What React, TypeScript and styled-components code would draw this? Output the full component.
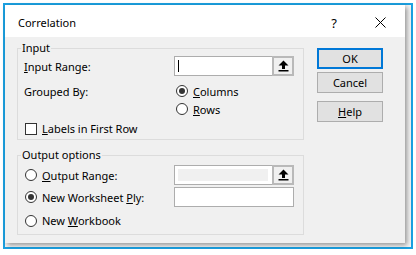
import React from 'react';
import styled, { createGlobalStyle } from 'styled-components';

const GlobalStyle = createGlobalStyle`
  body {
    margin: 0;
    background: #ffffff;
    font-family: "Noto Sans", "Open Sans", sans-serif;
    font-size: 11px;
    color: #000;
  }
`;

const Frame = styled.div`
  margin: 3px 0 0 3px;
  width: 410px;
  height: 246px;
  box-sizing: border-box;
  border: 2px solid #1ba1e2;
  background: #f4f4f4;
`;

const Dialog = styled.div`
  width: 400px;
  height: 238px;
  display: flex;
  flex-direction: column;
  background: #f0f0f0;
  box-shadow: 2px 2px 5px rgba(0, 0, 0, 0.4);
`;

const TitleBar = styled.div`
  flex: none;
  height: 32px;
  box-sizing: border-box;
  padding: 3px 2px 0 13px;
  display: flex;
  align-items: center;
  background: #fff;
`;

const Title = styled.div`
  flex: 1;
`;

const CaptionButton = styled.div`
  width: 46px;
  height: 100%;
  display: flex;
  align-items: center;
  justify-content: center;
  font-size: 13px;
`;

const Body = styled.div`
  flex: 1;
  display: flex;
  padding-left: 12px;
`;

const LeftColumn = styled.div`
  width: 287px;
  padding-top: 3px;
  display: flex;
  flex-direction: column;
  gap: 7px;
`;

const RightColumn = styled.div`
  margin-left: 13px;
  width: 66px;
  padding-top: 11px;
  display: flex;
  flex-direction: column;
`;

const Group = styled.fieldset<{ $pb: number }>`
  margin: 0;
  padding: 0 8px ${(p) => p.$pb}px 6px;
  border: 1px solid #dcdcdc;
  min-width: 0;
`;

const Legend = styled.legend`
  margin-left: -3px;
  padding: 0 1px;
  line-height: 16px;
`;

const Row = styled.div<{ $h: number; $mt?: number }>`
  display: grid;
  grid-template-columns: 151px 120px;
  align-items: center;
  height: ${(p) => p.$h}px;
  margin-top: ${(p) => p.$mt ?? 0}px;
`;

const GroupedRow = styled.div`
  display: grid;
  grid-template-columns: 151px 120px;
  grid-template-rows: 18px 18px;
  align-items: center;
  margin-top: 6px;
  margin-bottom: 1px;
`;

const Label = styled.span``;

const Choice = styled.label`
  display: flex;
  align-items: center;
  gap: 5px;
  margin-left: 1px;
`;

const RadioCircle = styled.span<{ $on?: boolean }>`
  width: 12px;
  height: 12px;
  box-sizing: border-box;
  border: 1px solid #333;
  border-radius: 50%;
  background: #fff;
  display: flex;
  align-items: center;
  justify-content: center;
  &::after {
    content: '';
    width: 6px;
    height: 6px;
    border-radius: 50%;
    background: ${(p) => (p.$on ? '#333' : 'transparent')};
  }
`;

const CheckBox = styled.span`
  width: 12px;
  height: 12px;
  box-sizing: border-box;
  border: 1px solid #333;
  background: #fff;
`;

const Field = styled.div`
  width: 120px;
  height: 20px;
  box-sizing: border-box;
  border: 1px solid #adadad;
  background: #fff;
  display: flex;
  align-items: stretch;
  margin-left: -1px;
`;

const FieldText = styled.div<{ $disabled?: boolean }>`
  flex: 1;
  margin: 3px;
  margin-right: 4px;
  background: ${(p) => (p.$disabled ? '#f0f0f0' : '#fff')};
  display: flex;
  align-items: center;
`;

const Caret = styled.span`
  width: 1px;
  height: 12px;
  background: #000;
`;

const RefButton = styled.div`
  width: 22px;
  margin: -1px -1px -1px 0;
  box-sizing: border-box;
  border: 2px solid #b9b9b9;
  background: #f0f0f0;
  display: flex;
  align-items: center;
  justify-content: center;
`;

const Button = styled.div<{ $default?: boolean; $mt?: number }>`
  height: 21px;
  box-sizing: border-box;
  margin-top: ${(p) => p.$mt ?? 0}px;
  border: ${(p) => (p.$default ? '2px solid #0078d7' : '1px solid #adadad')};
  background: #e1e1e1;
  display: flex;
  align-items: center;
  justify-content: center;
`;

const UpArrow = () => (
  <svg width="11" height="12" viewBox="0 0 11 12">
    <path d="M5.5 0.5 L10.5 5.5 L7 5.5 L7 9 L4 9 L4 5.5 L0.5 5.5 Z" fill="#000" />
    <rect x="0.5" y="10" width="10" height="1.5" fill="#000" />
  </svg>
);

const CloseIcon = () => (
  <svg width="11" height="11" viewBox="0 0 11 11">
    <path d="M0.5 0.5 L10.5 10.5 M10.5 0.5 L0.5 10.5" stroke="#000" strokeWidth="1" />
  </svg>
);

const Radio = ({ on, children }: { on?: boolean; children: React.ReactNode }) => (
  <Choice>
    <RadioCircle $on={on} />
    <Label>{children}</Label>
  </Choice>
);

const RefEdit = ({ disabled, caret }: { disabled?: boolean; caret?: boolean }) => (
  <Field>
    <FieldText $disabled={disabled}>{caret && <Caret />}</FieldText>
    <RefButton>
      <UpArrow />
    </RefButton>
  </Field>
);

export default function App() {
  return (
    <>
      <GlobalStyle />
      <Frame>
        <Dialog>
          <TitleBar>
            <Title>Correlation</Title>
            <CaptionButton>?</CaptionButton>
            <CaptionButton>
              <CloseIcon />
            </CaptionButton>
          </TitleBar>
          <Body>
            <LeftColumn>
              <Group $pb={1}>
                <Legend>Input</Legend>
                <Row $h={20}>
                  <Label>
                    <u>I</u>nput Range:
                  </Label>
                  <RefEdit caret />
                </Row>
                <GroupedRow>
                  <Label>Grouped By:</Label>
                  <Radio on>
                    <u>C</u>olumns
                  </Radio>
                  <span />
                  <Radio>
                    <u>R</u>ows
                  </Radio>
                </GroupedRow>
                <Row $h={19} $mt={1}>
                  <Choice>
                    <CheckBox />
                    <Label>
                      <u>L</u>abels in First Row
                    </Label>
                  </Choice>
                </Row>
              </Group>
              <Group $pb={4}>
                <Legend>Output options</Legend>
                <Row $h={20} $mt={2}>
                  <Radio>
                    <u>O</u>utput Range:
                  </Radio>
                  <RefEdit disabled />
                </Row>
                <Row $h={20} $mt={2}>
                  <Radio on>
                    New Worksheet <u>P</u>ly:
                  </Radio>
                  <Field />
                </Row>
                <Row $h={19} $mt={4}>
                  <Radio>
                    New <u>W</u>orkbook
                  </Radio>
                </Row>
              </Group>
            </LeftColumn>
            <RightColumn>
              <Button $default>OK</Button>
              <Button $mt={3}>Cancel</Button>
              <Button $mt={8}>
                <span>
                  <u>H</u>elp
                </span>
              </Button>
            </RightColumn>
          </Body>
        </Dialog>
      </Frame>
    </>
  );
}
